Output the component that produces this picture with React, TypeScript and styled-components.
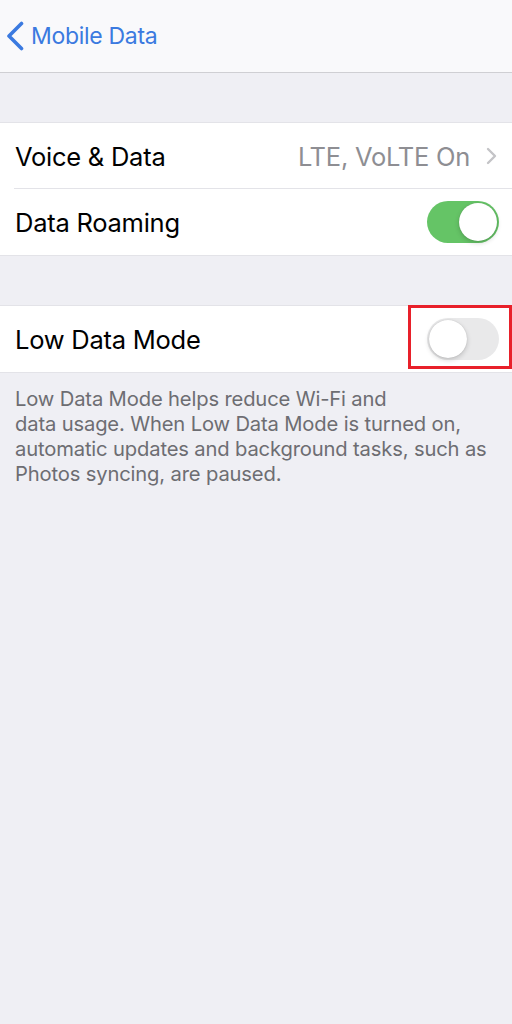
import React from "react";
import styled, { createGlobalStyle } from "styled-components";

const Global = createGlobalStyle`
  html, body { margin: 0; padding: 0; background: #efeff4; }
  body { font-family: Inter, "Liberation Sans", Arial, sans-serif; -webkit-font-smoothing: antialiased; }
`;

const Page = styled.div`
  width: 512px;
  min-height: 1024px;
  background: #efeff4;
  display: flex;
  flex-direction: column;
`;

const NavBar = styled.header`
  height: 72px;
  background: #f9f9fb;
  border-bottom: 1px solid #cfcfd3;
  display: flex;
  align-items: center;
  padding-left: 6px;
  gap: 6px;
  box-sizing: content-box;
`;

const BackLabel = styled.span`
  color: #3b7ae0;
  font-size: 23px;
  letter-spacing: -0.3px;
`;

const Group = styled.section<{ $top: number }>`
  margin-top: ${(p) => p.$top}px;
  background: #ffffff;
  border-top: 1px solid #e3e3e8;
  border-bottom: 1px solid #e3e3e8;
`;

const Row = styled.div<{ $divider?: boolean }>`
  height: 66px;
  display: flex;
  align-items: center;
  padding: 0 15px;
  position: relative;
  ${(p) =>
    p.$divider
      ? `&::after { content: ""; position: absolute; left: 14px; right: 0; bottom: 0; height: 1px; background: #e3e3e8; }`
      : ""}
`;

const Label = styled.span`
  flex: 1;
  color: #000;
  font-size: 25.5px;
  letter-spacing: -0.25px;
`;

const Detail = styled.span`
  color: #8e8e93;
  font-size: 25.5px;
  letter-spacing: -0.25px;
  margin-right: 16px;
`;

const Track = styled.div<{ $on: boolean }>`
  width: 72px;
  height: 42px;
  border-radius: 21px;
  background: ${(p) => (p.$on ? "#65c466" : "#e9e9ea")};
  position: relative;
  flex-shrink: 0;
  margin-right: -2px;
`;

const Knob = styled.div<{ $on: boolean }>`
  position: absolute;
  top: 2px;
  left: ${(p) => (p.$on ? "32px" : "2px")};
  width: 38px;
  height: 38px;
  border-radius: 50%;
  background: #fff;
  box-shadow: 0 2px 5px rgba(0, 0, 0, 0.18), 0 0 1px rgba(0, 0, 0, 0.2);
`;

const Highlight = styled.div`
  position: absolute;
  left: 408px;
  top: -1px;
  width: 104px;
  height: 64px;
  border: 3px solid #e8202a;
  box-sizing: border-box;
`;

const Footer = styled.p`
  margin: 13px 0 0;
  padding: 0 15px;
  color: #6d6d72;
  font-size: 20.2px;
  line-height: 25px;
  letter-spacing: -0.15px;
  white-space: nowrap;
`;

const Toggle = ({ on }: { on: boolean }) => (
  <Track $on={on}>
    <Knob $on={on} />
  </Track>
);

export default function App() {
  return (
    <Page>
      <Global />
      <NavBar>
        <svg width="19" height="30" viewBox="0 0 19 30">
          <path d="M15.5 2.5 L3 15 L15.5 27.5" fill="none" stroke="#3b7ae0" strokeWidth="3.6" strokeLinecap="round" strokeLinejoin="round" />
        </svg>
        <BackLabel>Mobile Data</BackLabel>
      </NavBar>
      <Group $top={49}>
        <Row $divider>
          <Label>Voice &amp; Data</Label>
          <Detail>LTE, VoLTE On</Detail>
          <svg width="11" height="18" viewBox="0 0 11 18">
            <path d="M2 2 L9 9 L2 16" fill="none" stroke="#c4c4c7" strokeWidth="2.4" strokeLinecap="round" strokeLinejoin="round" />
          </svg>
        </Row>
        <Row>
          <Label>Data Roaming</Label>
          <Toggle on />
        </Row>
      </Group>
      <Group $top={49}>
        <Row>
          <Label>Low Data Mode</Label>
          <Toggle on={false} />
          <Highlight />
        </Row>
      </Group>
      <Footer>
        Low Data Mode helps reduce Wi-Fi and
        <br />
        data usage. When Low Data Mode is turned on,
        <br />
        automatic updates and background tasks, such as
        <br />
        Photos syncing, are paused.
      </Footer>
    </Page>
  );
}
